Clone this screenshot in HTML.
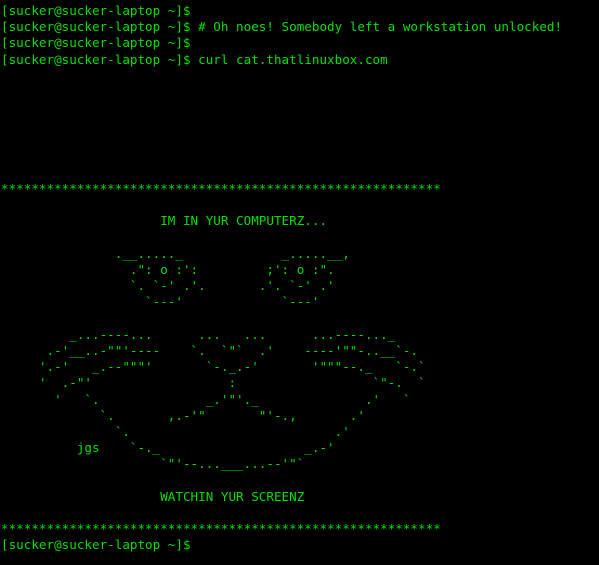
<!DOCTYPE html>
<html><head><meta charset="utf-8"><style>
html,body{margin:0;padding:0;background:#000;width:599px;height:565px;overflow:hidden}
pre{margin:0;padding:3px 0 0 1px;font-family:"DejaVu Sans Mono","Liberation Mono",monospace;font-size:12.6px;line-height:16.18px;color:#00e000;white-space:pre}
</style></head><body><pre>[sucker@sucker-laptop ~]$
[sucker@sucker-laptop ~]$ # Oh noes! Somebody left a workstation unlocked!
[sucker@sucker-laptop ~]$
[sucker@sucker-laptop ~]$ curl cat.thatlinuxbox.com







**********************************************************

                     IM IN YUR COMPUTERZ...

               .__....._             _.....__,
                 .": o :':         ;': o :".
                 `. `-' .'.       .'. `-' .'
                   `---'             `---'

         _...----...      ...   ...      ...----..._
      .-'__..-""'----    `.  `"`  .'    ----'""-..__`-.
     '.-'   _.--"""'       `-._.-'       '"""--._   `-.`
     '  .-"'                  :                  `"-.  `
       '   `.              _.'"'._              .'   `
             `.       ,.-'"       "'-.,       .'
               `.                           .'
          jgs    `-._                   _.-'
                     `"'--...___...--'"`

                     WATCHIN YUR SCREENZ

**********************************************************
[sucker@sucker-laptop ~]$
</pre></body></html>
